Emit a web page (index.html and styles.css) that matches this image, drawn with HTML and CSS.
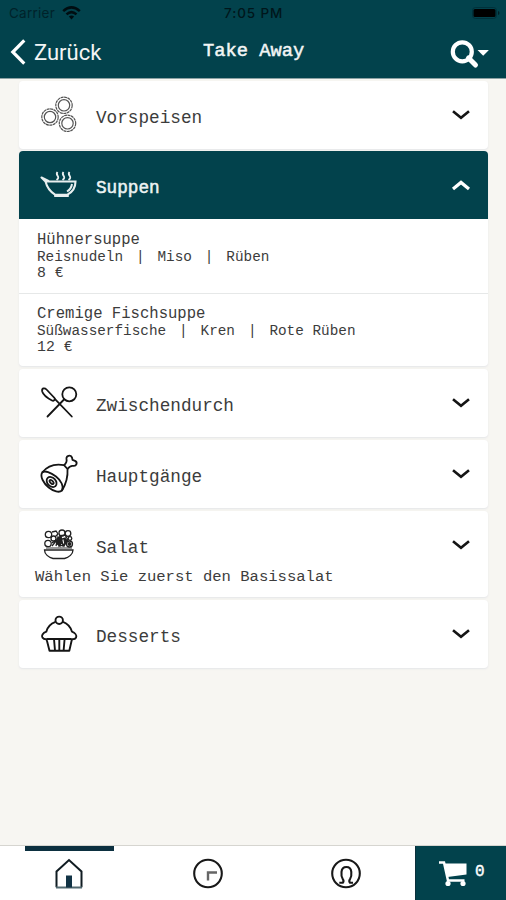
FILE: index.html
```html
<!DOCTYPE html>
<html lang="de">
<head>
<meta charset="utf-8">
<title>Take Away</title>
<link rel="stylesheet" href="styles.css">
</head>
<body>
<div class="app">
  <header class="header">
    <div class="status">
      <div class="carrier"><span>Carrier</span>
        <svg width="19" height="14" viewBox="0 0 19 14" fill="none" stroke="#000d11" stroke-width="2.5"><path d="M1.2 5.2Q9.5-2.4 17.8 5.2M4.5 8.4Q9.5 3.8 14.5 8.4"/><path d="M6.9 10.6Q9.5 8.4 12.1 10.6L9.5 13.4Z" fill="#000d11" stroke="none"/></svg>
      </div>
      <span class="time">7:05 PM</span>
      <svg class="battery" width="28" height="12" viewBox="0 0 28 12"><rect x=".5" y=".5" width="24" height="11" rx="3" fill="none" stroke="#00313b"/><rect x="1.5" y="2" width="22" height="8" rx="1.5" fill="#000"/><path d="M26 4v4q1.5-.5 1.5-2T26 4z" fill="#001f26"/></svg>
    </div>
    <nav class="navbar">
      <div class="back">
        <svg width="16" height="26" viewBox="0 0 16 26" fill="none" stroke="#fff" stroke-width="3.2"><path d="M14.3 1.4 2.8 13l11.5 11.6"/></svg>
        <span>Zurück</span>
      </div>
      <h1 class="title">Take Away</h1>
      <svg class="search" width="40" height="30" viewBox="0 0 40 30"><circle cx="12.3" cy="12.8" r="9.5" fill="none" stroke="#fff" stroke-width="4.2"/><path d="m18.500 19 7 7" stroke="#fff" stroke-width="5" stroke-linecap="round"/><path d="M27.500 11h11.400l-5.700 5.700z" fill="#fff"/></svg>
    </nav>
  </header>

  <main class="menu">
    <section class="card first">
      <div class="row">
        <svg class="icon" viewBox="0 0 40 40" fill="none" stroke="#555" stroke-width="1.2"><circle cx="25" cy="10.3" r="8.2" stroke-dasharray="3 .5"/><circle cx="25" cy="10.3" r="5.7"/><circle cx="11" cy="22" r="8.2" stroke-dasharray="3 .5"/><circle cx="11" cy="22" r="5.7"/><circle cx="28.5" cy="28.3" r="8.2" stroke-dasharray="3 .5"/><circle cx="28.5" cy="28.3" r="5.7"/></svg>
        <h2>Vorspeisen</h2>
        <svg class="chevron" viewBox="0 0 20 12"><path d="m2 2.2 8 6.6 8-6.6"/></svg>
      </div>
    </section>

    <section class="card open">
      <div class="row active">
        <svg class="icon" viewBox="0 0 40 40" fill="none" stroke="#e8efef" stroke-width="2.1"><path d="M6.500 16.500h30c0 7-4 11-8 13.200H16C11 26.500 8 22.500 6.500 16.500L2.500 12.500M2.500 12.500l7 3.500M16 31h13" stroke-linecap="round"/><path d="M33 19c-.5 3.500-2.500 6-5 7.500" stroke-width="2"/><path d="M17.500 15c5-3.500-2-4.500 1-8M23.500 15c5-3.500-2-4.500 1-8M29.500 15c5-3.500-2-4.500 1-8" stroke-width="1.9"/></svg>
        <h2>Suppen</h2>
        <svg class="chevron" viewBox="0 0 20 12"><path d="m2 10 8-6.600L18 10"/></svg>
      </div>
      <article class="dish">
        <h3>Hühnersuppe</h3>
        <p class="parts">Reisnudeln<i>|</i>Miso<i>|</i>Rüben</p>
        <p class="price">8 €</p>
      </article>
      <article class="dish">
        <h3>Cremige Fischsuppe</h3>
        <p class="parts">Süßwasserfische<i>|</i>Kren<i>|</i>Rote Rüben</p>
        <p class="price">12 €</p>
      </article>
    </section>

    <section class="card">
      <div class="row">
        <svg class="icon" viewBox="0 0 40 40" fill="none" stroke="#151515" stroke-width="1.8" stroke-linecap="round"><circle cx="30.300" cy="11.300" r="7"/><path d="M25 16.500 8.500 33.500M15.800 15.800l17 17.700"/><path d="M3.200 8.400C2.500 5.200 5.500 4.400 7.500 6.500l8 8.500c1 1.500-.8 3.500-2.500 2.500C8.500 15 4.200 11.800 3.200 8.400Z"/></svg>
        <h2>Zwischendurch</h2>
        <svg class="chevron" viewBox="0 0 20 12"><path d="m2 2.200 8 6.600 8-6.600"/></svg>
      </div>
    </section>

    <section class="card">
      <div class="row">
        <svg class="icon" viewBox="0 0 40 40" fill="none" stroke="#151515" stroke-width="1.800" stroke-linejoin="round"><g transform="translate(1 0)"><path d="M2.200 18.500C7 12.500 15 9.500 24 11.200L27.500 15c.5 7-1 14-5.500 21.500"/><path d="M2.200 18.500c-2.500 4 1.500 11 6.500 15s10.500 5.500 13.300 3c2-4-.8-10-6-14s-11.300-6.500-13.800-4Z"/><ellipse cx="11.600" cy="28" rx="5.700" ry="4.200" transform="rotate(47 11.600 28)"/><ellipse cx="11.600" cy="28" rx="2.500" ry="1.400" transform="rotate(47 11.600 28)"/><path d="M24 11.200c2.500-2 3-4 2.500-6.200C26 1.500 30.500.5 32 3.500l.5 2.400 2.500 1c3 1.500 1.500 5.500-1.800 5-2.300-.4-4.200 1-5.700 3.100"/></g></svg>
        <h2>Hauptgänge</h2>
        <svg class="chevron" viewBox="0 0 20 12"><path d="m2 2.200 8 6.600 8-6.600"/></svg>
      </div>
    </section>

    <section class="card with-note">
      <div class="row">
        <svg class="icon" viewBox="0 0 40 40" fill="none" stroke="#222" stroke-width="1.300"><path d="M5.500 25H34c0 4-4 7.500-8.500 8.500H14C9.500 32.500 5.500 29 5.500 25Z"/><path d="M7 23h26" stroke="#777"/><circle cx="9.500" cy="9.500" r="3.200"/><circle cx="9" cy="18.500" r="3.200"/><circle cx="14.500" cy="13.500" r="2.500"/><circle cx="30.500" cy="19" r="3"/><circle cx="30.500" cy="19" r="1.300" fill="#222"/><circle cx="23" cy="8" r="3"/><circle cx="29" cy="8.500" r="2.800"/><circle cx="31" cy="13.500" r="1.800"/><path d="m13 7 4-1 2 3-3 3m4-1 6-1 3 5-5 6-6-2 1-4 8-2M13 18l4-3 4 6M21 13l4 8 3-6M13 21l4-5 4 5 2-7M17 21l2-9 5 8"/><path d="m18 14 4-3 1 6-3 4zM25 14l3 1-2 4z" fill="#222"/></svg>
        <h2>Salat</h2>
        <svg class="chevron" viewBox="0 0 20 12"><path d="m2 2.200 8 6.600 8-6.600"/></svg>
      </div>
      <p class="note">Wählen Sie zuerst den Basissalat</p>
    </section>

    <section class="card">
      <div class="row">
        <svg class="icon" viewBox="0 0 40 40" fill="none" stroke="#151515" stroke-width="1.900" stroke-linejoin="round"><circle cx="20.200" cy="6.300" r="3.700"/><path d="M16.500 7.800C12 9.500 8.500 12.500 7.300 17.700c-3.500 1.200-5.300 4-3.800 6 1.200 1.500 3.600 1.700 5.100 1.300h22.800c2 .4 4.800.3 5.700-1.500.8-2-1-4.500-4.100-5.800C31.500 12.500 28.500 9.500 24 7.800M7.500 25l3 11.700h19.800L33 25M15 25l1 11.700M20.300 25v11.700M25.600 25l-1 11.700"/></svg>
        <h2>Desserts</h2>
        <svg class="chevron" viewBox="0 0 20 12"><path d="m2 2.200 8 6.600 8-6.600"/></svg>
      </div>
    </section>
  </main>

  <footer class="tabs">
    <div class="tab selected">
      <svg width="32" height="32" viewBox="0 0 32 32" fill="none" stroke="#101c22" stroke-width="2"><path d="M3.500 29.300V13.500L16 2l12.500 11.500v15.800"/><path d="M3 29.500h26" stroke="#526970"/><path d="M13 17.500h6v12h-6z" fill="#123345" stroke="none"/></svg>
    </div>
    <div class="tab">
      <svg width="32" height="32" viewBox="0 0 32 32" fill="none" stroke="#181818" stroke-width="2.100"><circle cx="16" cy="15.500" r="13.800"/><path d="M16 22.500v-8h9" stroke="#666" stroke-width="2.400"/></svg>
    </div>
    <div class="tab">
      <svg width="32" height="32" viewBox="0 0 32 32" fill="none" stroke="#181818" stroke-width="2.100"><circle cx="16" cy="15.500" r="13.800"/><path d="M9.300 24.700h3.500c1.200-1.400.8-2.700-.1-3.900-1.400-2-1.500-4.200-1.200-7C11.800 10.600 13.400 9 16.400 9s4.600 1.600 4.900 4.800c.3 2.800.2 5-1.200 7-.9 1.200-1.300 2.500-.1 3.900h3"/></svg>
    </div>
    <div class="cart">
      <svg width="30" height="27" viewBox="0 0 30 27"><path d="M1 2.500h5l4 18h16.500" fill="none" stroke="#fff" stroke-width="2.500"/><path d="M6.500 3.500H28.500v11L9.500 17z" fill="#fff"/><circle cx="10" cy="23.500" r="2.600" fill="#fff"/><circle cx="25" cy="23.500" r="2.600" fill="#fff"/></svg>
      <span>0</span>
    </div>
  </footer>
</div>
</body>
</html>
```

FILE: styles.css
```css
* { box-sizing: border-box; margin: 0; padding: 0; }
body {
  background: #f7f6f2;
  font-family: "Liberation Mono", monospace;
  color: #3c3c3c;
}
svg { display: block; flex: none; }
.app { height: 900px; display: flex; flex-direction: column; overflow: hidden; }

.header { height: 79px; flex: none; background: #02424c; border-bottom: 1px solid #8da2a4; }
.status {
  height: 26px;
  display: grid;
  grid-template-columns: 215px 1fr auto;
  align-items: center;
  padding: 0 6px 0 9px;
  font: 13.5px Inter, sans-serif;
  color: #00222a;
}
.carrier { display: flex; align-items: center; gap: 7px; }
.carrier span { letter-spacing: .25px; }
.time { font-weight: 500; letter-spacing: .9px; color: #00161b; }
.battery { justify-self: end; }
.navbar {
  height: 52px;
  display: grid;
  grid-template-columns: 193px 1fr auto;
  align-items: center;
  padding: 0 16px 0 10px;
  color: #f2f5f5;
}
.back { display: flex; align-items: center; gap: 8px; font: 22px Roboto, sans-serif; }
.title { font-size: 18.75px; font-weight: 400; line-height: 24px; margin-bottom: 3px; -webkit-text-stroke: .5px #f2f5f5; }
.search { justify-self: end; margin-top: 3px; }

.menu { flex: 1; min-height: 0; padding: 2px 18px 0 19px; display: flex; flex-direction: column; gap: 3px; }
.card { background: #fff; border-radius: 4px; box-shadow: 0 1px 2px #e4e6e8; overflow: hidden; flex: none; }
.row { height: 68px; display: flex; align-items: center; padding: 0 17px 0 20px; }
.icon { width: 40px; height: 40px; }
.row h2 { flex: 1; margin-left: 17px; padding-top: 5px; font-size: 17.7px; line-height: 22px; font-weight: 400; }
.chevron { width: 20px; height: 12px; fill: none; stroke: #151515; stroke-width: 2.6; }
.card.first { margin-bottom: -1px; }
.row.active { background: #02424c; color: #edf3f3; }
.active h2 { padding-top: 6px; -webkit-text-stroke: .5px #edf3f3; }
.active .chevron { stroke: #fff; stroke-width: 3.2; }
.dish { height: 74px; padding: 12px 18px 0; }
.dish + .dish { height: 73px; border-top: 1px solid #e6e8e8; padding-top: 11px; }
.dish h3 { font-size: 15.6px; line-height: 18px; font-weight: 400; }
.parts { font-size: 14.35px; line-height: 16px; }
.parts i { display: inline-block; width: 4ch; text-align: center; font-style: normal; }
.price { font-size: 14.8px; line-height: 17px; }
.with-note { height: 86px; }
.note { padding-left: 16px; margin-top: -11px; font-size: 15.55px; line-height: 18px; }

.tabs {
  height: 55px;
  flex: none;
  display: grid;
  grid-template-columns: 138.5px 138.5px 138px 1fr;
  background: #fff;
  border-top: 1px solid #d6d5d0;
}
.tab { display: flex; flex-direction: column; align-items: center; padding-top: 12px; }
.selected { padding-top: 0; }
.selected::before { content: ""; width: 89px; height: 5px; background: #0c3040; margin-bottom: 7px; }
.cart { display: flex; align-items: center; padding: 1px 0 0 22px; gap: 7px; background: #02424c; color: #fff; border-left: 1px solid #0b303b; font-size: 16px; -webkit-text-stroke: .4px #fff; }
.cart span { margin-top: -4px; }
```
